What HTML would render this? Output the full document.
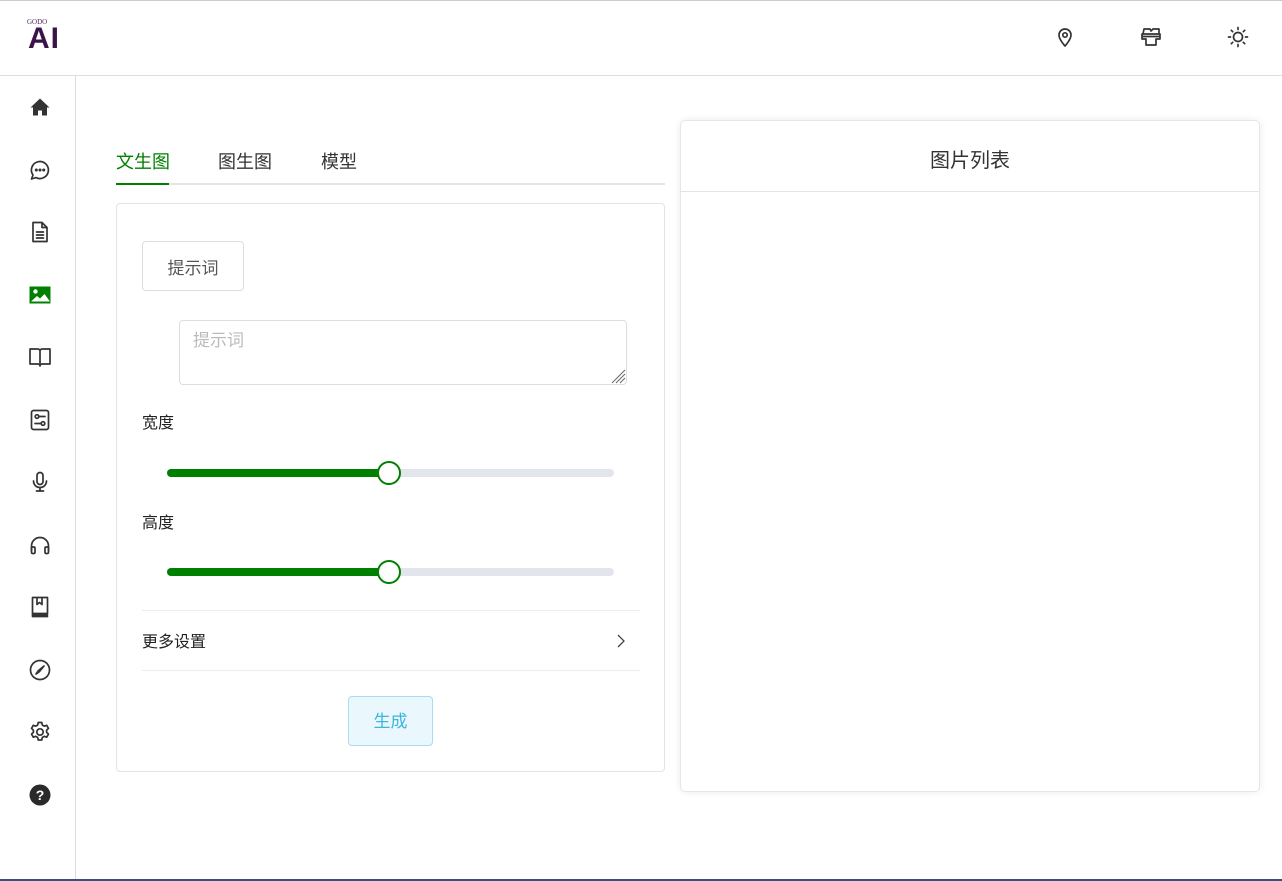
<!DOCTYPE html>
<html><head><meta charset="utf-8"><style>
*{box-sizing:border-box;margin:0;padding:0}
body{width:1282px;height:881px;background:#fff;font-family:"Liberation Sans","Noto Sans CJK SC",sans-serif;position:relative;overflow:hidden;color:#222}
.a{position:absolute}
svg.i{position:absolute;width:24px;height:24px;fill:none;stroke:#333;stroke-width:1.7;stroke-linecap:round;stroke-linejoin:round}
.track{position:absolute;left:167px;width:447px;height:8px;border-radius:4px;background:#e2e6ec}
.fill{position:absolute;left:0;top:0;width:222px;height:8px;border-radius:4px;background:#008000}
.thumb{position:absolute;left:210px;top:-8px;width:24px;height:24px;border-radius:50%;border:2px solid #008000;background:#fff}
</style></head><body>
<div class="a" style="left:0;top:0;width:1282px;height:1px;background:#ccc"></div>
<div class="a" style="left:0;top:75px;width:1282px;height:1px;background:#ddd"></div>
<div class="a" style="left:75px;top:76px;width:1px;height:805px;background:#ddd"></div>
<div class="a" style="left:0;top:879px;width:1282px;height:2px;background:#3a4a8a"></div>
<div class="a" style="left:27px;top:18px;font-size:7px;color:#4a1f5a;font-family:'Liberation Serif',serif">GODO</div>
<div class="a" style="left:28px;top:22px;font-size:30px;font-weight:bold;color:#3b1347;letter-spacing:1px;line-height:34px">AI</div>
<!-- header icons -->
<svg class="i" style="left:1053px;top:25px" viewBox="0 0 24 24"><path d="M12 21s-6-6.5-6-11a6 6 0 0 1 12 0c0 4.5-6 11-6 11z"/><circle cx="12" cy="10" r="2.2"/></svg>
<svg class="i" style="left:1139px;top:25px" viewBox="0 0 24 24"><path d="M3 9h18v5h-4v6H7v-6H3zM4 9l1-5h6l1 2 2-2h6v5M3 11.5h18"/></svg>
<svg class="i" style="left:1226px;top:25px" viewBox="0 0 24 24"><circle cx="12" cy="12" r="4.5"/><path d="M12 2.5v2M12 19.5v2M2.5 12h2M19.5 12h2M5.3 5.3l1.4 1.4M17.3 17.3l1.4 1.4M5.3 18.7l1.4-1.4M17.3 6.7l1.4-1.4"/></svg>
<!-- sidebar icons -->
<svg class="i" style="left:28px;top:95px" viewBox="0 0 24 24"><path d="M2.5 12.5L12 3.5l9.5 9h-2.5v8h-5v-5h-4v5H5v-8z" fill="#333" stroke="none"/></svg>
<svg class="i" style="left:28px;top:158px" viewBox="0 0 24 24"><path d="M3.5 21l1.5-4A8.5 8.5 0 1 1 8 19.6z"/><circle cx="8.3" cy="12" r=".7" fill="#333"/><circle cx="12" cy="12" r=".7" fill="#333"/><circle cx="15.7" cy="12" r=".7" fill="#333"/></svg>
<svg class="i" style="left:28px;top:220px" viewBox="0 0 24 24"><path d="M5 2.5h9l5 5v14H5zM14 2.5v5h5M8.5 12h7M8.5 15h7M8.5 18h7"/></svg>
<svg class="i" style="left:28px;top:283px" viewBox="0 0 24 24"><rect x="1.5" y="3.5" width="21" height="17" fill="#008000" stroke="none"/><circle cx="7.5" cy="8.5" r="2.2" fill="#fff" stroke="none"/><path d="M3 18.5l6-5.5 3 2.5 4.5-4.5 5.5 7.5z" fill="#fff" stroke="none"/></svg>
<svg class="i" style="left:28px;top:345px" viewBox="0 0 24 24"><path d="M2 4h8c1 0 2 1 2 2v15c0-1-1-2-2-2H2zM22 4h-8c-1 0-2 1-2 2v15c0-1 1-2 2-2h8z"/></svg>
<svg class="i" style="left:28px;top:408px" viewBox="0 0 24 24"><rect x="3.5" y="2.5" width="17" height="19" rx="2"/><circle cx="9" cy="8.5" r="1.8"/><path d="M11 8.5h6M7 15.5h6"/><circle cx="15" cy="15.5" r="1.8"/></svg>
<svg class="i" style="left:28px;top:470px" viewBox="0 0 24 24"><rect x="9" y="2.5" width="6" height="12" rx="3"/><path d="M5.5 11a6.5 6.5 0 0 0 13 0M12 17.5v3.5M8.5 21h7"/></svg>
<svg class="i" style="left:28px;top:533px" viewBox="0 0 24 24"><path d="M3.5 18v-5a8.5 8.5 0 0 1 17 0v5"/><rect x="3.5" y="14" width="3.5" height="6.5" rx="1.2"/><rect x="17" y="14" width="3.5" height="6.5" rx="1.2"/></svg>
<svg class="i" style="left:28px;top:595px" viewBox="0 0 24 24"><path d="M4.5 2.5h15v16h-15zM4.5 18.5v3h15M9 2.5v7l2.5-2 2.5 2v-7M4.5 20h15"/></svg>
<svg class="i" style="left:28px;top:658px" viewBox="0 0 24 24"><circle cx="12" cy="12" r="9.5"/><path d="M16 8l-5.5 4.5L8 16l3.5-2.5z" fill="#333"/></svg>
<svg class="i" style="left:28px;top:720px" viewBox="0 0 24 24"><circle cx="12" cy="12" r="3.2"/><path d="M10.2 2.5h3.6l.5 2.5 2 1.2 2.4-.9 1.8 3.1-1.900 1.7v2.3l1.9 1.7-1.8 3.1-2.4-.9-2 1.2-.5 2.5h-3.6l-.5-2.5-2-1.2-2.4.9-1.8-3.1 1.9-1.7v-2.3L3.5 8.4l1.8-3.1 2.4.9 2-1.2z"/></svg>
<svg class="i" style="left:28px;top:783px" viewBox="0 0 24 24"><circle cx="12" cy="12" r="10.5" fill="#2a2a2a" stroke="none"/><text x="12" y="17" text-anchor="middle" font-size="14" font-weight="bold" fill="#fff" stroke="none" font-family="Liberation Sans">?</text></svg>
<!-- tabs -->
<div class="a" style="left:116px;top:148px;font-size:18px;color:#008000">文生图</div>
<div class="a" style="left:218px;top:148px;font-size:18px;color:#333">图生图</div>
<div class="a" style="left:321px;top:148px;font-size:18px;color:#333">模型</div>
<div class="a" style="left:116px;top:183px;width:549px;height:2px;background:#e2e4e8"></div>
<div class="a" style="left:116px;top:183px;width:53px;height:2px;background:#008000"></div>
<!-- card -->
<div class="a" style="left:116px;top:203px;width:549px;height:569px;border:1px solid #e4e4e4;border-radius:4px"></div>
<div class="a" style="left:142px;top:241px;width:102px;height:50px;border:1px solid #ddd;border-radius:4px;font-size:17px;color:#555;text-align:center;line-height:54px">提示词</div>
<div class="a" style="left:179px;top:320px;width:448px;height:65px;border:1px solid #ddd;border-radius:4px;font-size:17px;color:#bbb;padding:5px 13px">提示词</div>
<svg class="a" style="left:608px;top:366px" width="18" height="18" viewBox="0 0 18 18" stroke="#666" stroke-width="1"><path d="M17 4L4 17M17 8L8 17M17 12L12 17"/></svg>
<div class="a" style="left:142px;top:409px;font-size:16px;color:#222">宽度</div>
<div class="track" style="top:469px"><div class="fill"></div><div class="thumb"></div></div>
<div class="a" style="left:142px;top:509px;font-size:16px;color:#222">高度</div>
<div class="track" style="top:568px"><div class="fill"></div><div class="thumb"></div></div>
<div class="a" style="left:142px;top:610px;width:498px;height:1px;background:#ececec"></div>
<div class="a" style="left:142px;top:628px;font-size:16px;color:#222">更多设置</div>
<svg class="a" style="left:614px;top:632px" width="14" height="18" viewBox="0 0 14 18" fill="none" stroke="#444" stroke-width="1.3"><path d="M4 3l6 6-6 6"/></svg>
<div class="a" style="left:142px;top:670px;width:498px;height:1px;background:#ececec"></div>
<div class="a" style="left:348px;top:696px;width:85px;height:50px;border:1px solid #a8dcef;background:#eaf7fc;border-radius:4px;font-size:17px;color:#3cb5e0;text-align:center;line-height:50px">生成</div>
<!-- right card -->
<div class="a" style="left:680px;top:120px;width:580px;height:672px;border:1px solid #e6e6e6;border-radius:5px;box-shadow:0 0 8px rgba(0,0,0,.08)"></div>
<div class="a" style="left:680px;top:144px;width:580px;text-align:center;font-size:20px;color:#333">图片列表</div>
<div class="a" style="left:681px;top:191px;width:578px;height:1px;background:#e4e4e8"></div>
</body></html>
